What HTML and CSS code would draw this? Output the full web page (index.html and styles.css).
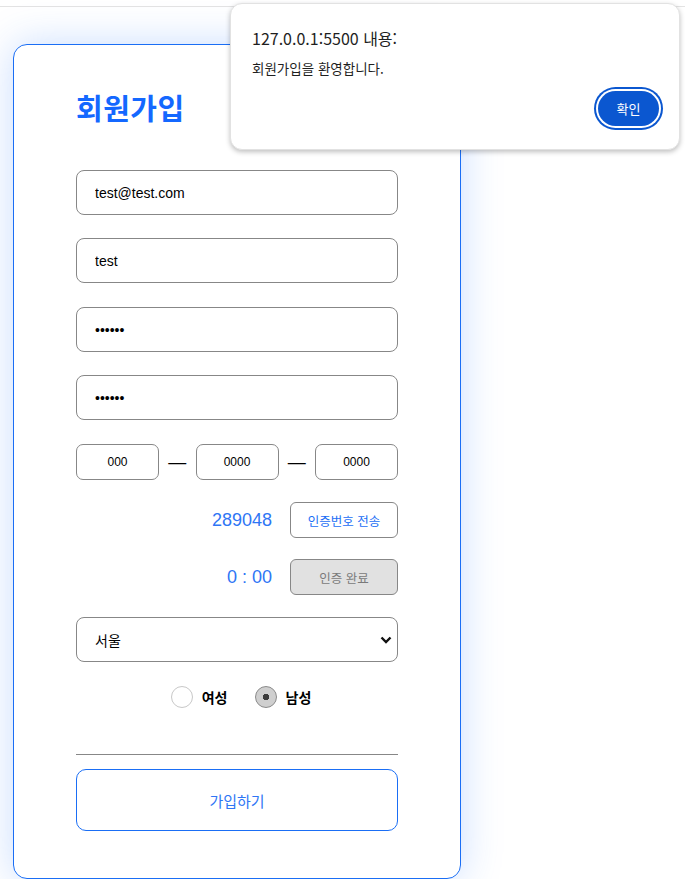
FILE: index.html
```html
<!DOCTYPE html>
<html lang="ko">
<head>
    <meta charset="UTF-8">
    <meta name="viewport" content="width=device-width, initial-scale=1.0">
    <title>회원가입</title>
    <link rel="stylesheet" href="styles.css">
</head>
<body>
    <div class="topbar"></div>

    <section class="card">
        <h1>회원가입</h1>
        <form class="signup">
            <input class="field" type="email" value="test@test.com">
            <input class="field" type="text" value="test">
            <input class="field gap24" type="password" value="123456">
            <input class="field" type="password" value="123456">

            <div class="phone">
                <input class="phone-box" type="text" value="000">
                <span class="dash">—</span>
                <input class="phone-box" type="text" value="0000">
                <span class="dash">—</span>
                <input class="phone-box" type="text" value="0000">
            </div>

            <div class="verify">
                <span class="code">289048</span>
                <button type="button" class="small-btn">인증번호 전송</button>
            </div>

            <div class="verify tight">
                <span class="code">0 : 00</span>
                <button type="button" class="small-btn done" disabled>인증 완료</button>
            </div>

            <div class="select-wrap">
                <select class="field region">
                    <option>서울</option>
                </select>
                <svg class="arrow" width="12" height="8" viewBox="0 0 12 8">
                    <path d="M1.5 1.5 L6 6 L10.5 1.5" fill="none" stroke="#111" stroke-width="2.4"/>
                </svg>
            </div>

            <div class="gender">
                <label class="option"><input type="radio" name="gender"> 여성</label>
                <label class="option"><input type="radio" name="gender" checked> 남성</label>
            </div>

            <hr class="line">

            <button type="button" class="submit">가입하기</button>
        </form>
    </section>

    <div class="dialog">
        <p class="dialog-title">127.0.0.1:5500 내용:</p>
        <p class="dialog-msg">회원가입을 환영합니다.</p>
        <div class="dialog-actions">
            <button type="button" class="ok">확인</button>
        </div>
    </div>
</body>
</html>
```

FILE: styles.css
```css
body {
    margin: 0;
    font-family: 'Liberation Sans', 'Noto Sans CJK KR', sans-serif;
    background: #fff;
    color: #000;
}

.topbar {
    height: 6px;
    border-bottom: 1px solid #e3e3e3;
}

.card {
    width: 322px;
    margin: 37px 0 0 13px;
    padding: 42px 62px 47px;
    border: 1px solid #1a6ef5;
    border-radius: 14px;
    background: #fff;
    box-shadow: 0 0 40px rgba(40, 120, 255, 0.25);
}

.card h1 {
    margin: 0 0 43px;
    height: 40px;
    line-height: 40px;
    font-family: 'Noto Sans CJK KR', sans-serif;
    font-size: 29px;
    font-weight: 700;
    letter-spacing: 0.5px;
    color: #1468ff;
}

.signup {
    display: flex;
    flex-direction: column;
    gap: 23px;
}

.field {
    box-sizing: border-box;
    width: 100%;
    height: 45px;
    padding: 0 18px;
    border: 1px solid #878787;
    border-radius: 8px;
    font-family: 'Liberation Sans', 'Noto Sans CJK KR', sans-serif;
    font-size: 14px;
    color: #000;
    background: #fff;
    outline: none;
}

.field.gap24 {
    margin-top: 1px;
}

.phone {
    display: flex;
    align-items: center;
    justify-content: space-between;
    margin-top: 1px;
}

.phone-box {
    box-sizing: border-box;
    width: 83px;
    height: 36px;
    border: 1px solid #878787;
    border-radius: 7px;
    text-align: center;
    font-family: 'Liberation Sans', sans-serif;
    font-size: 12px;
    color: #000;
    outline: none;
}

.dash {
    font-size: 18px;
    color: #000;
}

.verify {
    display: flex;
    justify-content: flex-end;
    align-items: center;
    gap: 18px;
    margin-top: -1px;
}

.verify.tight {
    margin-top: -2px;
}

.code {
    font-size: 18px;
    color: #2f76f5;
}

.small-btn {
    width: 108px;
    height: 36px;
    border: 1px solid #878787;
    border-radius: 6px;
    background: #fff;
    font-family: 'Noto Sans CJK KR', sans-serif;
    font-size: 12.5px;
    color: #1a6ef5;
}

.small-btn.done {
    background: #e1e1e1;
    color: #7a7a7a;
}

.select-wrap {
    position: relative;
    margin-top: -1px;
}

.region {
    appearance: none;
    font-family: 'Noto Sans CJK KR', sans-serif;
    font-size: 14px;
}

.arrow {
    position: absolute;
    right: 6px;
    top: 19px;
}

.gender {
    display: flex;
    justify-content: center;
    gap: 27px;
    padding-left: 8px;
    margin-top: 1px;
}

.option {
    display: flex;
    align-items: center;
    gap: 9px;
    font-family: 'Noto Sans CJK KR', sans-serif;
    font-size: 14px;
    font-weight: 700;
}

.option input {
    appearance: none;
    box-sizing: border-box;
    width: 22px;
    height: 22px;
    margin: 0;
    border: 1px solid #c8c8c8;
    border-radius: 50%;
    background: #fff;
}

.option input:checked {
    border-color: #8a8a8a;
    background: radial-gradient(circle, #3c3c3c 0 3px, #cfcfcf 3.5px);
}

.line {
    width: 100%;
    margin: 23px 0 0;
    border: 0;
    border-top: 1px solid #878787;
}

.submit {
    height: 62px;
    margin-top: -9px;
    border: 1px solid #1a6ef5;
    border-radius: 10px;
    background: #fff;
    font-family: 'Noto Sans CJK KR', sans-serif;
    font-size: 15px;
    color: #2f76f5;
}

.dialog {
    position: absolute;
    left: 230px;
    top: 3px;
    box-sizing: border-box;
    width: 450px;
    height: 147px;
    padding: 22px 20px 0 21px;
    border: 1px solid #e2e2e2;
    border-radius: 12px;
    background: #fff;
    box-shadow: 0 2px 5px rgba(0, 0, 0, 0.25);
    font-family: 'Noto Sans CJK KR', sans-serif;
}

.dialog-title {
    margin: 0;
    font-size: 16px;
    color: #1f1f1f;
}

.dialog-msg {
    margin: 8px 0 0;
    font-size: 13.5px;
    color: #1f1f1f;
}

.dialog-actions {
    display: flex;
    justify-content: flex-end;
    margin-top: 13px;
}

.ok {
    width: 61px;
    height: 35px;
    border: 0;
    border-radius: 18px;
    background: #0b57d0;
    color: #fff;
    font-family: 'Noto Sans CJK KR', sans-serif;
    font-size: 13px;
    box-shadow: 0 0 0 2px #fff, 0 0 0 4px #0b57d0;
}
```
